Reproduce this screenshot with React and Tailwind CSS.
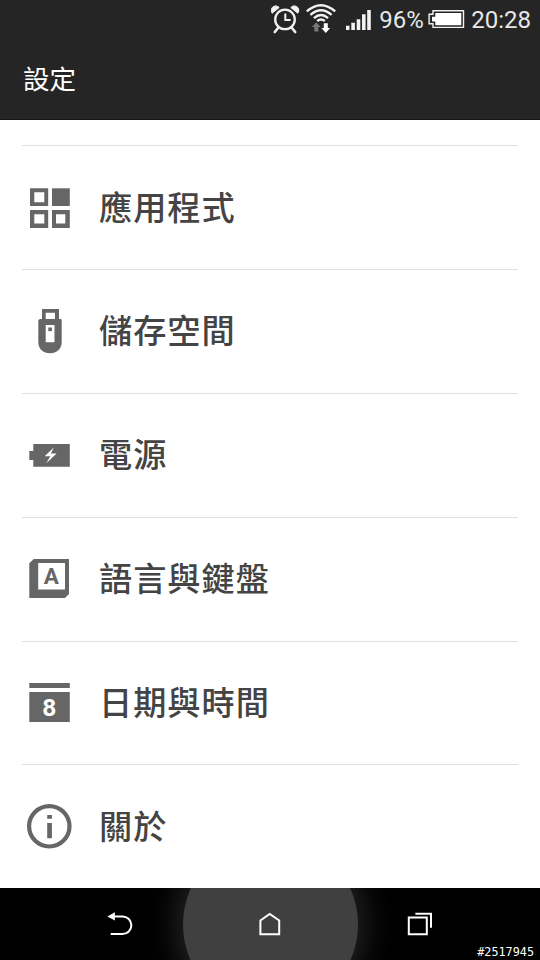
import React from 'react';

const AppsIcon = () => (
    <svg width="48" height="47" viewBox="0 0 48 47" fill="#666">
        <path fillRule="evenodd" d="M5 4.3h18.2V22H5zM9.3 8.2v10h10v-10z" />
        <path d="M27 4.3h17.8V22H27z" />
        <path fillRule="evenodd" d="M5 26h18.2v18H5zM9.3 30.2v9.3h10v-9.3z" />
        <path fillRule="evenodd" d="M27 26h17.8v18H27zM31 30.2v9.3h9.3v-9.3z" />
    </svg>
);

const StorageIcon = () => (
    <svg width="48" height="47" viewBox="0 0 48 47" fill="#666">
        <path fillRule="evenodd" d="M17 1h17v11H17zM20.7 4.7V11h9.3V4.7z" />
        <path fillRule="evenodd" d="M15 11h21l.7 1v22c0 7-5 11.3-11.7 11.3S13.3 41 13.3 34V12zM20.7 17v17.3h8.8V17z" />
        <path d="M23.3 19.5h3.6v3.6h-3.6z" />
    </svg>
);

const PowerIcon = () => (
    <svg width="48" height="47" viewBox="0 0 48 47">
        <path fill="#666" d="M8.3 12h36.5v22.8H8.3V28H4.3v-9h4z" />
        <path fill="#fff" d="M29 15.3l-9.3 9h5.6L21.3 31.3l10.3-9.9h-5.8z" />
    </svg>
);

const LanguageIcon = () => (
    <svg width="48" height="47" viewBox="0 0 48 47">
        <path fill="#666" d="M8.7 3H44v35l-4 4H4.3V7.3z" />
        <path fill="#fff" d="M13.2 7H40v26.5H13.2z" />
        <text x="26.4" y="28.4" textAnchor="middle" fill="#666" className="font-['Roboto',sans-serif] text-[22.5px] font-bold">A</text>
    </svg>
);

const DateIcon = () => (
    <svg width="48" height="47" viewBox="0 0 48 47">
        <path fill="#666" d="M4.3 4h40.5v5H4.3zM4.3 13h40.5v30H4.3z" />
        <text x="24.4" y="37" textAnchor="middle" fill="#fff" className="font-['Roboto',sans-serif] text-[24.5px] font-bold">8</text>
    </svg>
);

const AboutIcon = () => (
    <svg width="48" height="47" viewBox="0 0 48 47">
        <circle cx="24.3" cy="23.3" r="20.2" fill="none" stroke="#666" strokeWidth="4.2" />
        <path fill="#666" d="M22.2 12h4.7v3.8h-4.7zM22.2 20h4.7v15.3h-4.7z" />
    </svg>
);

const items = [
    { label: '應用程式', Icon: AppsIcon },
    { label: '儲存空間', Icon: StorageIcon },
    { label: '電源', Icon: PowerIcon },
    { label: '語言與鍵盤', Icon: LanguageIcon },
    { label: '日期與時間', Icon: DateIcon },
    { label: '關於', Icon: AboutIcon },
];

function StatusBar() {
    return (
        <div className="flex h-[38px] items-center justify-end pr-[9px] font-['Roboto',sans-serif] text-[24px] leading-none text-[#e8e8e8]">
            {/* Alarm */}
            <svg className="mr-[6px]" width="29" height="38" viewBox="271 0 29 38" fill="none" stroke="#f2f2f2">
                <circle cx="285" cy="19.4" r="9.8" strokeWidth="2.3" />
                <path d="M285.3 13.5v6.6h5.3" strokeWidth="2" />
                <path d="M278 28l-3.2 4M292 28l3.2 4" strokeWidth="2.6" strokeLinecap="round" />
                <path d="M272.2 13.2a4.3 4.3 0 0 1 7-5.6zM297.8 13.2a4.3 4.3 0 0 0-7-5.6z" fill="#f2f2f2" strokeWidth="1" />
            </svg>
            {/* Wifi with traffic arrows */}
            <svg className="mr-[9px]" width="31" height="38" viewBox="306 0 31 38" fill="none" stroke="#f2f2f2" strokeWidth="2.4">
                <path d="M306.8 11.4q14.2-12.4 28.4 0M310.4 14.9q10.6-9.2 21.2 0M313.9 18.1q7.1-6 14.2 0M317.2 21q3.8-3 7.6 0" />
                <path d="M316.3 22.3l4.4 4.7h-2.4v4.4h-4V27h-2.4z" fill="#777" stroke="none" />
                <path d="M325.8 33l4.4-4.9h-2.4v-4.9h-4v4.9h-2.4z" fill="#fff" stroke="none" />
            </svg>
            {/* Signal */}
            <svg className="mr-[7px]" width="26" height="38" viewBox="346 0 26 38" fill="#f2f2f2">
                <path d="M346 25.8h3.5V30H346zM351.3 22.7h3.6V30h-3.6zM356.7 19.3h3.6V30h-3.6zM362 14.3h3.6V30H362zM367.2 10h3.6v20h-3.6z" />
            </svg>
            <span className="w-[45px] pt-[1px]">96%</span>
            <svg className="mr-[6px] ml-[4px]" width="37" height="38" viewBox="428 0 37 38">
                <path d="M433 10.7h30.5v16.7H433v-3.6h-3.9v-9.5h3.9z" fill="none" stroke="#f2f2f2" strokeWidth="1.4" />
                <path d="M435.3 13h26v12.2h-26v-3.8H432v-4.6h3.3z" fill="#fff" />
            </svg>
            <span className="pt-[1px]">20:28</span>
        </div>
    );
}

function NavBar() {
    return (
        <div className="relative h-[72px] shrink-0 overflow-hidden bg-black">
            {/* Press highlight behind the home button */}
            <div className="absolute top-[-51px] left-[183px] size-[175px] rounded-full bg-[#404040] shadow-[0_0_32px_6px_#272727]" />
            <div className="relative grid h-full grid-cols-3 place-items-center px-[45px]">
                <svg width="30" height="72" viewBox="105 888 30 72">
                    <path d="M112 916.4h10.5a8.8 8.8 0 0 1 0 17.7h-11.8" fill="none" stroke="#fff" strokeWidth="2" />
                    <path d="M107.3 916.4l7.6-4.2v8.4z" fill="#fff" />
                </svg>
                <svg width="30" height="72" viewBox="255 888 30 72" fill="none" stroke="#fff" strokeWidth="2">
                    <path d="M260.4 934.2v-13.7l9.3-6.6 9.5 6.6v13.7z" />
                </svg>
                <svg width="30" height="72" viewBox="405 888 30 72" fill="none" stroke="#fff" strokeWidth="2">
                    <path d="M408.8 917.6h18v16.6h-18zM415.4 913.7H431v14" />
                </svg>
            </div>
            <span className="absolute right-[6px] bottom-[1px] font-['DejaVu_Sans_Mono',monospace] text-[11.8px] leading-[13px] text-white">#2517945</span>
        </div>
    );
}

function App() {
    return (
        <div className="flex h-[960px] w-[540px] flex-col overflow-hidden bg-white font-['Noto_Sans_CJK_TC',sans-serif]">
            <header className="h-[120px] shrink-0 border-b border-[#161616] bg-[#252525]">
                <StatusBar />
                <h1 className="flex h-[80px] items-center pl-[23px] text-[26.5px] font-normal text-white">設定</h1>
            </header>

            <main className="flex-1 overflow-hidden px-[22px] pt-[25.4px]">
                {items.map(({ label, Icon }) => (
                    <div key={label} className="flex h-[123.8px] items-center border-t border-[#e0e0e0] pl-[3px]">
                        <Icon />
                        <span className="ml-[26px] pb-[5px] text-[33.2px] leading-none font-medium tracking-[1px] text-[#444]">{label}</span>
                    </div>
                ))}
            </main>

            <NavBar />
        </div>
    );
}

export default App;
